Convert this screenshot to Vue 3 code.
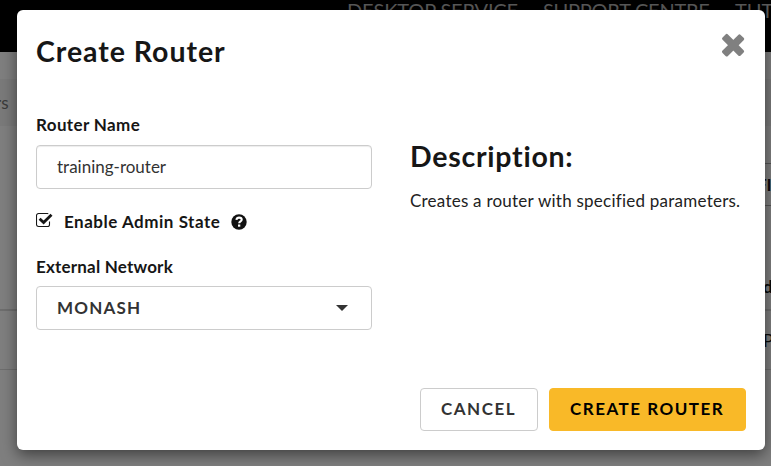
<script setup>
import { ref } from 'vue'

const routerName = ref('training-router')
const adminState = ref(true)
</script>

<template>
  <div class="screen">
    <div class="page">
      <nav class="nav">
        <span class="n1">DESKTOP SERVICE</span>
        <span class="n2">SUPPORT CENTRE</span>
        <span class="n3">TUT</span>
      </nav>
      <div class="crumbs">rs</div>
      <div class="toolbar"><span>FI</span></div>
      <div class="thead"><span>d</span></div>
      <div class="trow"><span>P</span></div>
    </div>
    <div class="backdrop">
      <section class="modal" role="dialog">
        <header class="head">
          <h3 class="title">Create Router</h3>
          <button class="close" aria-label="Close">
            <svg width="24" height="24" viewBox="0 0 24 24" fill="#808080">
              <rect x="-.8" y="8.4" width="25.6" height="7.6" rx="1.7" transform="rotate(45 12.3 12.2)" />
              <rect x="-.8" y="8.4" width="25.6" height="7.6" rx="1.7" transform="rotate(-45 12.3 12.2)" />
            </svg>
          </button>
        </header>
        <div class="body">
          <form class="form">
            <label class="label l-name">Router Name</label>
            <input v-model="routerName" class="input" type="text" />
            <div class="check" @click="adminState = !adminState">
              <svg class="box" width="17" height="16" viewBox="0 0 17 16">
                <path d="M13.5 9.6v2.8a2.1 2.1 0 0 1-2.1 2.1H2.6a2.1 2.1 0 0 1-2.1-2.1V3.6a2.1 2.1 0 0 1 2.1-2.1h8.8c.3 0 .6.1.9.2" fill="none" stroke="#161616" stroke-width="1.1" />
                <path v-if="adminState" d="M3.6 6.7 7.6 10.6 15.5 2.7" fill="none" stroke="#161616" stroke-width="2.8" />
              </svg>
              <span class="label l-admin">Enable Admin State</span>
              <svg class="help" width="16" height="16" viewBox="0 0 16 16">
                <circle cx="8" cy="8" r="7.7" fill="#111" />
                <path d="M5.4 5.9C5.7 4.2 6.8 3.6 8.1 3.6c1.5 0 2.6.8 2.6 2.1 0 1.8-2.5 1.7-2.5 3.6" fill="none" stroke="#fff" stroke-width="2.1" />
                <rect x="7" y="10.5" width="2.3" height="2.2" fill="#fff" />
              </svg>
            </div>
            <label class="label l-net">External Network</label>
            <button type="button" class="select">
              <span>MONASH</span>
              <i class="caret"></i>
            </button>
          </form>
          <div class="desc">
            <h3 class="dtitle">Description:</h3>
            <p class="dtext">Creates a router with specified parameters.</p>
          </div>
        </div>
        <footer class="foot">
          <button class="btn cancel"><span>CANCEL</span></button>
          <button class="btn create"><span>CREATE ROUTER</span></button>
        </footer>
      </section>
    </div>
  </div>
</template>

<style>
body { margin: 0; overflow: hidden; }
</style>

<style scoped>
* { box-sizing: border-box; }
.screen {
  display: grid;
  width: 771px;
  height: 466px;
  overflow: hidden;
  font-family: Lato, "Open Sans", sans-serif;
  font-variant-ligatures: none;
  color: #161616;
}
.page, .backdrop { grid-area: 1 / 1; min-width: 0; min-height: 0; }
.page { background: #fff; overflow: hidden; }
.nav {
  display: flex;
  height: 52px;
  padding-left: 347px;
  background: #000;
  color: #b4b4b4;
  font-size: 20px;
  line-height: 21px;
  white-space: nowrap;
}
.nav span { flex: none; }
.n1 { width: 196px; letter-spacing: -.15px; }
.n2 { width: 192px; letter-spacing: -.25px; }
.crumbs {
  height: 47px;
  margin-top: 27px;
  background: #f5f5f5;
  color: #777;
  font-size: 17px;
  line-height: 47px;
  text-indent: -5px;
}
.toolbar, .thead, .trow { display: flex; overflow: hidden; white-space: nowrap; }
.toolbar {
  height: 43px;
  margin-top: 37px;
  padding-left: 757px;
  font-size: 17px;
  line-height: 41px;
  font-weight: 700;
}
.toolbar span { flex: 1; border-top: 1px solid #aaa; border-bottom: 1px solid #aaa; }
.thead {
  height: 105px;
  padding: 61px 0 0 763px;
  border-bottom: 2px solid #ddd;
  font-size: 17px;
  line-height: 40px;
  font-weight: 700;
}
.trow { height: 59px; padding-left: 763px; border-bottom: 1px solid #ddd; font-size: 17px; line-height: 60px; }
.backdrop { padding: 10px 6px 16px 17px; background: rgba(0, 0, 0, .5); }
.modal {
  display: flex;
  flex-direction: column;
  height: 440px;
  padding: 0 19px 19px;
  background: #fff;
  border-radius: 6px;
  box-shadow: 0 5px 15px rgba(0, 0, 0, .5);
}
.head { display: flex; justify-content: space-between; align-items: flex-start; height: 104px; padding-top: 24px; }
.title, .dtitle { margin: 0; font-size: 28.5px; line-height: 35px; font-weight: 700; white-space: nowrap; }
.title { letter-spacing: .95px; }
.dtitle { letter-spacing: .75px; }
button { font-family: inherit; }
.close { display: flex; width: 24px; height: 24px; margin: -1px 1px 0 0; padding: 0; border: 0; background: none; }
.body { display: flex; gap: 38px; height: 274px; }
.form { display: flex; flex-direction: column; width: 336px; }
.label { font-size: 17px; line-height: 22px; font-weight: 700; white-space: nowrap; }
.l-name { margin-bottom: 9px; letter-spacing: .38px; }
.input {
  width: 336px;
  height: 44px;
  padding: 0 20px 1px;
  border: 1px solid #ccc;
  border-radius: 4px;
  box-shadow: inset 0 1px 1px rgba(0, 0, 0, .075);
  font: 17px/22px Lato, sans-serif;
  color: #333;
  outline: none;
}
.check { display: flex; align-items: center; height: 22px; margin: 22px 0 23px; }
.box { flex: none; margin-top: -4px; }
.l-admin { width: 156px; margin: 0 11px; letter-spacing: .52px; }
.l-net { margin-bottom: 8px; letter-spacing: .2px; }
.select {
  display: flex;
  align-items: center;
  justify-content: space-between;
  height: 44px;
  padding: 0 23px 1px 20px;
  border: 1px solid #ccc;
  border-radius: 4px;
  background: #fff;
  color: #333;
  font-size: 17px;
  font-weight: 700;
  letter-spacing: 1.2px;
}
.caret { border: 6px solid transparent; border-top-color: #333; border-bottom: 0; }
.desc { padding-top: 25px; }
.dtext { margin: 16px 0 0; font-size: 17px; line-height: 22px; letter-spacing: .24px; color: #222; white-space: nowrap; }
.foot { display: flex; justify-content: flex-end; gap: 11px; }
.btn {
  display: flex;
  align-items: center;
  height: 43px;
  padding: 0 20px 2px;
  border: 1px solid #ccc;
  border-radius: 4px;
  background: #fff;
  color: #333;
  font-size: 17px;
  font-weight: 700;
  letter-spacing: 1.5px;
  white-space: nowrap;
}
.cancel { width: 118px; }
.create { width: 197px; border-color: #f9b928; background: #f9b928; color: #000; }
</style>
